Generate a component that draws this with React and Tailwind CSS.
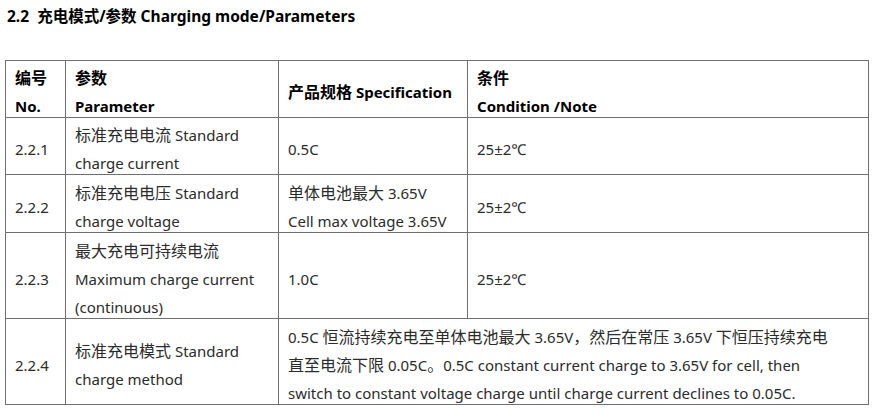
import React from "react";

const rows = [
  { no: "2.2.1", param: ["标准充电电流 Standard", "charge current"], spec: ["0.5C"], cond: "25±2℃", h: "h-[57px]" },
  { no: "2.2.2", param: ["标准充电电压 Standard", "charge voltage"], spec: ["单体电池最大 3.65V", "Cell max voltage 3.65V"], cond: "25±2℃", h: "h-[58px]" },
  { no: "2.2.3", param: ["最大充电可持续电流", "Maximum charge current", "(continuous)"], spec: ["1.0C"], cond: "25±2℃", h: "h-[86px]" },
];

// CJK glyphs in the document run a touch larger than the latin text
const Mixed = ({ text }) =>
  text.split(/([\u3000-\u9fff\uff00-\uffef]+)/).map((part, i) =>
    /[\u3000-\u9fff\uff00-\uffef]/.test(part) ? (
      <span key={i} className="text-[16px] leading-none">{part}</span>
    ) : (
      part
    )
  );

const Lines = ({ lines }) => (
  <div className="flex flex-col translate-y-[3px]">
    {lines.map((l) => (
      <span key={l} className="block h-[28px] whitespace-nowrap leading-[28px]">
        <Mixed text={l} />
      </span>
    ))}
  </div>
);

const cell = "border border-[#6f6f6f] px-[9px] py-0 align-middle";

const App = () => {
  return (
    <div
      className="w-[880px] h-[414px] bg-white text-[15px] text-[#2b2b2b] overflow-hidden"
      style={{ fontFamily: '"Noto Sans", "Noto Sans CJK SC", sans-serif' }}
    >
      <h1 className="pl-[7px] pt-[5px] h-[60px] text-[15.5px] font-bold text-black leading-[22px]">
        2.2&nbsp; 充电模式/参数 Charging mode/Parameters
      </h1>
      <table className="ml-[5px] w-[864px] border-collapse table-fixed">
        <colgroup>
          <col className="w-[60px]" />
          <col className="w-[213px]" />
          <col className="w-[189px]" />
          <col />
        </colgroup>
        <thead>
          <tr className="h-[57px] font-bold text-black">
            <td className={cell}><Lines lines={["编号", "No."]} /></td>
            <td className={cell}><Lines lines={["参数", "Parameter"]} /></td>
            <td className={cell}><Lines lines={["产品规格 Specification"]} /></td>
            <td className={cell}><Lines lines={["条件", "Condition /Note"]} /></td>
          </tr>
        </thead>
        <tbody>
          {rows.map((r) => (
            <tr key={r.no} className={r.h}>
              <td className={cell}><Lines lines={[r.no]} /></td>
              <td className={cell}><Lines lines={r.param} /></td>
              <td className={cell}><Lines lines={r.spec} /></td>
              <td className={cell}><Lines lines={[r.cond]} /></td>
            </tr>
          ))}
          <tr className="h-[86px]">
            <td className={cell}><Lines lines={["2.2.4"]} /></td>
            <td className={cell}><Lines lines={["标准充电模式 Standard", "charge method"]} /></td>
            <td className={cell} colSpan={2}>
              <Lines
                lines={[
                  "0.5C 恒流持续充电至单体电池最大 3.65V，然后在常压 3.65V 下恒压持续充电",
                  "直至电流下限 0.05C。0.5C constant current charge to 3.65V for cell, then",
                  "switch to constant voltage charge until charge current declines to 0.05C.",
                ]}
              />
            </td>
          </tr>
        </tbody>
      </table>
    </div>
  );
};

export default App;
